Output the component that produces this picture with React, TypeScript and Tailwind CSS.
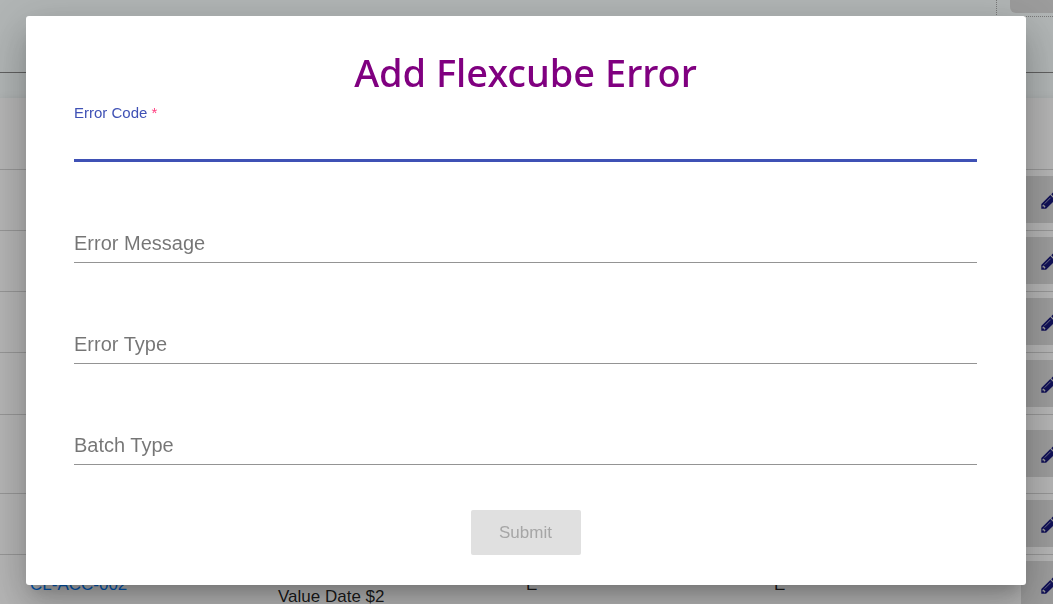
import React from "react";

const rows = [
  { height: "h-[61px]" },
  { height: "h-[61px]" },
  { height: "h-[61px]" },
  { height: "h-[62px]" },
  { height: "h-[79px]" },
  { height: "h-[61px]" },
  { height: "h-[61px]", code: "CL-ACC-002", message: "Value Date $2", type: "E", batch: "E" },
];

function Pencil() {
  return (
    <svg viewBox="0 0 17 17" className="h-[17px] w-[17px]" aria-hidden="true">
      <path
        className="fill-[#18187a]"
        d="M0.3 16.8V12L9.3 3l4.8 4.8-9 9zM10.2 2.2l1.5-1.5q1-.9 2 0l2.7 2.7q.9 1 0 2l-1.5 1.5z"
      />
      <path className="fill-[#d8d8d8]" d="M1.5 13.2l1.1-.6 1.9 1.9-.7 1.1H2.9v-1H1.5z" />
      <path className="fill-none stroke-[#b9b9cf]" strokeWidth="0.8" d="M3.6 11.7L9.6 5.7" />
    </svg>
  );
}

function ErrorTable() {
  return (
    <div className="h-screen overflow-hidden bg-white" inert>
      <div className="h-[98px] bg-[#f9ffff]">
        <div className="flex h-[17px] items-start">
          <div className="h-4 flex-1" />
          <div className="h-[17px] w-[57px] border-b border-l border-dotted border-[#aaa] pl-[13px]">
            <button className="block h-[13px] w-full rounded-bl-md bg-[#dcdcdc]" aria-label="Add" />
          </div>
        </div>
        <div className="h-14 border-b border-[#888]" />
      </div>
      <table className="relative w-[1120px] table-fixed border-collapse bg-white text-[17px] leading-6 text-black/87 shadow-[0_3px_10px_rgba(0,0,0,0.14)]">
        <thead>
          <tr className="h-[71px] border-b border-[#d4d4d4]">
            <th className="w-[30px]" />
            <th className="w-[248px]" />
            <th className="w-[248px]" />
            <th className="w-[248px]" />
            <th className="w-[247px]" />
            <th />
          </tr>
        </thead>
        <tbody>
          {rows.map((row, i) => (
            <tr key={i} className={`${row.height} border-b border-[#d4d4d4]`}>
              <td />
              <td className="p-0 text-[#007bff]">{row.code}</td>
              <td className="p-0">
                {row.message && (
                  <>
                    <br />
                    {row.message}
                  </>
                )}
              </td>
              <td className="p-0">{row.type}</td>
              <td className="p-0">{row.batch}</td>
              <td className="p-0">
                <button className="flex h-[47px] w-full items-center bg-[#dcdcdc] pt-0.5 pl-5" aria-label="Edit">
                  <Pencil />
                </button>
              </td>
            </tr>
          ))}
        </tbody>
      </table>
    </div>
  );
}

function Field({ id, label, active = false }: { id: string; label: string; active?: boolean }) {
  return (
    <div className="grid h-[58px]">
      <label
        htmlFor={id}
        className={
          active
            ? "pointer-events-none col-start-1 row-start-1 self-start text-[15px] leading-[18px] text-[#3f51b5]"
            : "pointer-events-none col-start-1 row-start-1 self-end pb-2 text-xl leading-6 text-black/54"
        }
      >
        {label}
        {active && <span className="text-[#ff4081]"> *</span>}
      </label>
      <input
        id={id}
        type="text"
        required={active}
        className={
          active
            ? "col-start-1 row-start-1 h-9 w-full self-end border-b-3 border-[#3f51b5] bg-transparent text-xl outline-none"
            : "col-start-1 row-start-1 h-9 w-full self-end border-b border-[#949494] bg-transparent text-xl outline-none"
        }
      />
    </div>
  );
}

export default function App() {
  return (
    <div className="font-['Liberation_Sans',Arial,sans-serif]">
      <ErrorTable />
      <div className="fixed inset-0 overflow-hidden bg-black/29 pt-4 pr-[27px] pl-[26px]">
        <div
          role="dialog"
          aria-labelledby="dialog-title"
          className="mx-auto max-w-[1000px] rounded-[3px] bg-white pt-8 pr-[49px] pb-[30px] pl-12 shadow-[0_11px_15px_-7px_rgba(0,0,0,0.2),0_24px_38px_3px_rgba(0,0,0,0.14),0_9px_46px_8px_rgba(0,0,0,0.12)]"
        >
          <h1
            id="dialog-title"
            className="mb-2 text-center font-['Noto_Sans','Open_Sans',sans-serif] text-[38px] leading-[48px] font-medium text-[#800080]"
          >
            Add Flexcube Error
          </h1>
          <form>
            <div className="flex flex-col gap-[43px]">
              <Field id="error-code" label="Error Code" active />
              <Field id="error-message" label="Error Message" />
              <Field id="error-type" label="Error Type" />
              <Field id="batch-type" label="Batch Type" />
            </div>
            <button
              type="submit"
              disabled
              className="mx-auto mt-[45px] block h-[45px] w-[110px] rounded-xs bg-[#e0e0e0] text-[17px] text-[#a6a6a6]"
            >
              Submit
            </button>
          </form>
        </div>
      </div>
    </div>
  );
}
